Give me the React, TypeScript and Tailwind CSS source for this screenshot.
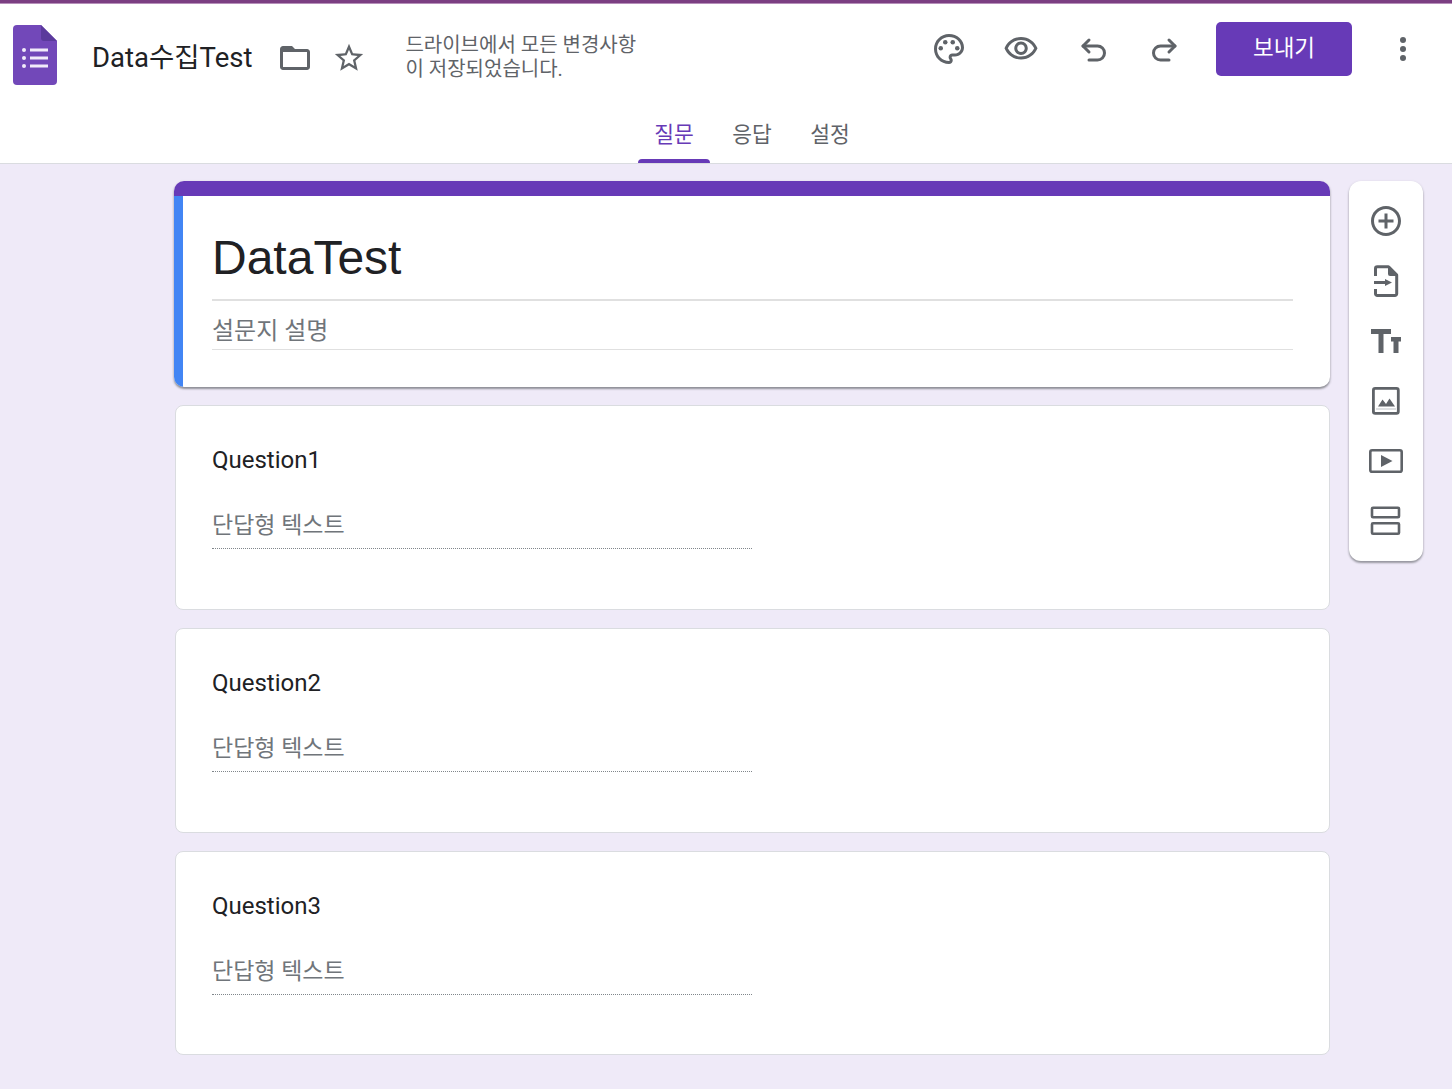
import React from "react";

const KR = "font-['Roboto','Noto_Sans_CJK_KR',sans-serif]";

function Mat({ d, size = 36, className = "" }: { d: string; size?: number; className?: string }) {
  return (
    <svg width={size} height={size} viewBox="0 0 24 24" fill="#5f6368" className={"block shrink-0 " + className}>
      <path d={d} fillRule="evenodd" />
    </svg>
  );
}

function Logo() {
  return (
    <svg width="44" height="60" viewBox="0 0 44 60" className="block shrink-0">
      <path d="M4 0H28L44 16V56a4 4 0 0 1-4 4H4a4 4 0 0 1-4-4V4a4 4 0 0 1 4-4z" fill="#7248b9" />
      <path d="M28 0L44 16H31a3 3 0 0 1-3-3z" fill="#5b3a9c" />
      <g fill="#f1ebfa">
        <circle cx="11" cy="25" r="2" />
        <circle cx="11" cy="33" r="2" />
        <circle cx="11" cy="41" r="2" />
        <rect x="17" y="23.5" width="18" height="3" />
        <rect x="17" y="31.5" width="18" height="3" />
        <rect x="17" y="39.5" width="18" height="3" />
      </g>
    </svg>
  );
}

function Palette() {
  return (
    <svg width="36" height="36" viewBox="0 0 24 24" fill="#5f6368" className="block shrink-0">
      <path fillRule="evenodd" d="M12 22C6.49 22 2 17.51 2 12S6.49 2 12 2s10 4.04 10 9c0 3.31-2.69 6-6 6h-1.77c-.28 0-.5.22-.5.5 0 .12.05.23.13.33.41.47.64 1.06.64 1.67 0 1.38-1.12 2.5-2.5 2.5zm0-18c-4.41 0-8 3.59-8 8s3.59 8 8 8c.28 0 .5-.22.5-.5 0-.16-.08-.28-.14-.35-.41-.46-.63-1.05-.63-1.65 0-1.38 1.12-2.5 2.5-2.5H16c2.21 0 4-1.79 4-4 0-3.86-3.59-7-8-7z" />
      <circle cx="6.5" cy="11.5" r="1.5" />
      <circle cx="9.5" cy="7.5" r="1.5" />
      <circle cx="14.5" cy="7.5" r="1.5" />
      <circle cx="17.5" cy="11.5" r="1.5" />
    </svg>
  );
}

function Undo({ flip = false }: { flip?: boolean }) {
  return (
    <svg width="36" height="36" viewBox="0 0 36 36" fill="none" stroke="#5f6368" strokeWidth="3" strokeLinecap="round" strokeLinejoin="round" className={"block shrink-0 " + (flip ? "-scale-x-100" : "")}>
      <path d="M14 9L8 15l6 6" />
      <path d="M8 15H22.5a6 6 0 0 1 0 14H14" />
    </svg>
  );
}

function More() {
  return (
    <svg width="36" height="36" viewBox="0 0 36 36" fill="#5f6368" className="block shrink-0">
      <circle cx="18" cy="9" r="3" />
      <circle cx="18" cy="18" r="3" />
      <circle cx="18" cy="27" r="3" />
    </svg>
  );
}

function ImportDoc() {
  return (
    <svg width="36" height="36" viewBox="0 0 36 36" fill="none" className="block shrink-0">
      <path d="M7.5 13V5.5a1.8 1.8 0 0 1 1.8-1.8H20.5L28.7 12V30.7a1.8 1.8 0 0 1-1.8 1.8H9.3a1.8 1.8 0 0 1-1.8-1.8V26" stroke="#5f6368" strokeWidth="3" strokeLinejoin="round" />
      <path d="M20 3.5H22L30 11.5V13H22a2 2 0 0 1-2-2z" fill="#5f6368" />
      <path d="M6 18H17V16L24 19.5 17 23V21H6z" fill="#5f6368" />
    </svg>
  );
}

function TextT() {
  return (
    <svg width="36" height="36" viewBox="0 0 36 36" fill="#5f6368" className="block shrink-0">
      <path d="M3 6H23V11H15.5V30H10.5V11H3z" />
      <path d="M23 14H33V18.5H30.5V30H25.5V18.5H23z" />
    </svg>
  );
}

function ImageIcon() {
  return (
    <svg width="36" height="36" viewBox="0 0 36 36" fill="none" className="block shrink-0">
      <rect x="5.4" y="5.4" width="24.9" height="24.9" rx="1.8" stroke="#5f6368" strokeWidth="2.8" />
      <path d="M10 23.5L14.5 16.5 18 21 21.5 15.5 27 23.5z" fill="#5f6368" />
      <rect x="8" y="25.5" width="20" height="1" fill="#bdc1c6" />
    </svg>
  );
}

function Video() {
  return (
    <svg width="36" height="36" viewBox="0 0 36 36" fill="none" className="block shrink-0">
      <rect x="2.3" y="7.3" width="31.4" height="21.4" rx="1.8" stroke="#5f6368" strokeWidth="2.6" />
      <path d="M13 12L24.5 18 13 24z" fill="#5f6368" />
    </svg>
  );
}

function Section() {
  return (
    <svg width="36" height="36" viewBox="0 0 36 36" fill="none" stroke="#5f6368" strokeWidth="2.6" className="block shrink-0">
      <rect x="4" y="4.8" width="27" height="9.4" rx="1" />
      <rect x="4" y="20.3" width="27" height="10.4" rx="1" />
    </svg>
  );
}

function Question({ title, tall = true }: { title: string; tall?: boolean }) {
  return (
    <section className={(tall ? "h-[205px]" : "h-[204px]") + " ml-px rounded-lg border border-[#dadce0] bg-white pt-[38px] pl-9"}>
      <h2 className={"h-8 text-[24px] leading-8 text-[#202124] " + KR}>{title}</h2>
      <div className="mt-[24px] h-[49px] w-[540px] border-b border-dotted border-[#80868b]">
        <p className={"text-[23px] leading-[52px] text-[#70757a] " + KR}>단답형 텍스트</p>
      </div>
    </section>
  );
}

export default function App() {
  return (
    <div className={"min-h-screen bg-[#efeaf8] " + KR}>
      <header className="border-b border-[#dadce0] bg-white">
        <div className="h-1 border-b border-[#b68fba] bg-[#7b3f82]" />
        <div className="flex h-[94px] items-start">
          <div className="mt-[21px] ml-[13px]"><Logo /></div>
          <h1 className="mt-[34px] ml-[35px] text-[27.5px] leading-10 text-[#202124]">Data수집Test</h1>
          <div className="mt-[36px] ml-[25px]"><Mat size={36} d="M20 6h-8l-2-2H4c-1.1 0-1.99.9-1.99 2L2 18c0 1.1.9 2 2 2h16c1.1 0 2-.9 2-2V8c0-1.1-.9-2-2-2zm0 12H4V8h16v10z" /></div>
          <div className="mt-[37px] ml-[19px]"><Mat size={34} d="M22 9.24l-7.19-.62L12 2 9.19 8.63 2 9.24l5.46 4.73L5.82 21 12 17.27 18.18 21l-1.63-7.03L22 9.24zM12 15.4l-3.76 2.27 1-4.28-3.32-2.88 4.38-.38L12 6.1l1.71 4.04 4.38.38-3.32 2.88 1 4.28L12 15.4z" /></div>
          <p className="mt-[29px] ml-[39px] w-[240px] text-[20px] leading-6 text-[#5f6368]">드라이브에서 모든 변경사항<br />이 저장되었습니다.</p>
          <div className="mt-[27px] ml-auto flex items-center gap-9 pr-[33px]">
            <Palette />
            <Mat d="M12 6c3.79 0 7.17 2.13 8.82 5.5C19.17 14.87 15.79 17 12 17s-7.17-2.13-8.82-5.5C4.83 8.13 8.21 6 12 6m0-2C7 4 2.73 7.11 1 11.5 2.73 15.89 7 19 12 19s9.27-3.11 11-7.5C21.27 7.11 17 4 12 4zm0 5c1.38 0 2.5 1.12 2.5 2.5S13.38 14 12 14s-2.5-1.12-2.5-2.5S10.62 9 12 9m0-2c-2.48 0-4.5 2.02-4.5 4.5S9.52 16 12 16s4.5-2.02 4.5-4.5S14.48 7 12 7z" />
            <Undo />
            <Undo flip />
          </div>
          <button className="mt-[18px] flex h-[54px] w-[136px] items-center justify-center rounded-[5px] bg-[#673ab7] text-[22.5px] text-white">보내기</button>
          <div className="mt-[27px] ml-[33px] mr-[31px]"><More /></div>
        </div>
        <nav className="flex h-[65px] items-stretch gap-[6px] pl-[638px] text-[21.5px] text-[#5f6368]">
          <a className="relative flex w-[72px] items-center justify-center pt-[10px] text-[#673ab7]">
            질문
            <span className="absolute right-0 bottom-0 left-0 h-1 rounded-t bg-[#673ab7]" />
          </a>
          <a className="flex w-[72px] items-center justify-center pt-[10px]">응답</a>
          <a className="flex w-[72px] items-center justify-center pt-[10px]">설정</a>
        </nav>
      </header>

      <main className="flex items-start gap-[19px] pt-[17px] pb-[34px] pl-[174px]">
        <div className="flex w-[1156px] flex-col gap-[18px]">
          <section className="h-[206px] overflow-hidden rounded-[10px] bg-white shadow-[0_2px_2px_rgba(60,64,67,0.45),0_1px_3px_rgba(60,64,67,0.2)]">
            <div className="h-[15px] bg-[#673ab7]" />
            <div className="h-[191px] border-l-[9px] border-[#4285f4] pt-[31px] pl-[29px] pr-[37px]">
              <div className="h-[74px] border-b-2 border-[#e0e0e0]">
                <h2 className="font-['Liberation_Sans','Noto_Sans_CJK_KR',sans-serif] text-[48px] leading-[62px] text-[#202124]">DataTest</h2>
              </div>
              <div className="h-[49px] border-b border-[#e0e0e0]">
                <p className="text-[24px] leading-[60px] text-[#70757a]">설문지 설명</p>
              </div>
            </div>
          </section>
          <Question title="Question1" />
          <Question title="Question2" />
          <Question title="Question3" tall={false} />
        </div>

        <aside className="flex h-[380px] w-[74px] flex-col items-center gap-6 rounded-xl bg-white pt-[22px] shadow-[0_2px_2px_rgba(60,64,67,0.4),0_1px_3px_rgba(60,64,67,0.2)]">
          <Mat d="M13 7h-2v4H7v2h4v4h2v-4h4v-2h-4V7zm-1-5C6.48 2 2 6.48 2 12s4.48 10 10 10 10-4.48 10-10S17.52 2 12 2zm0 18c-4.41 0-8-3.59-8-8s3.59-8 8-8 8 3.59 8 8-3.59 8-8 8z" />
          <ImportDoc />
          <TextT />
          <ImageIcon />
          <Video />
          <Section />
        </aside>
      </main>
    </div>
  );
}
